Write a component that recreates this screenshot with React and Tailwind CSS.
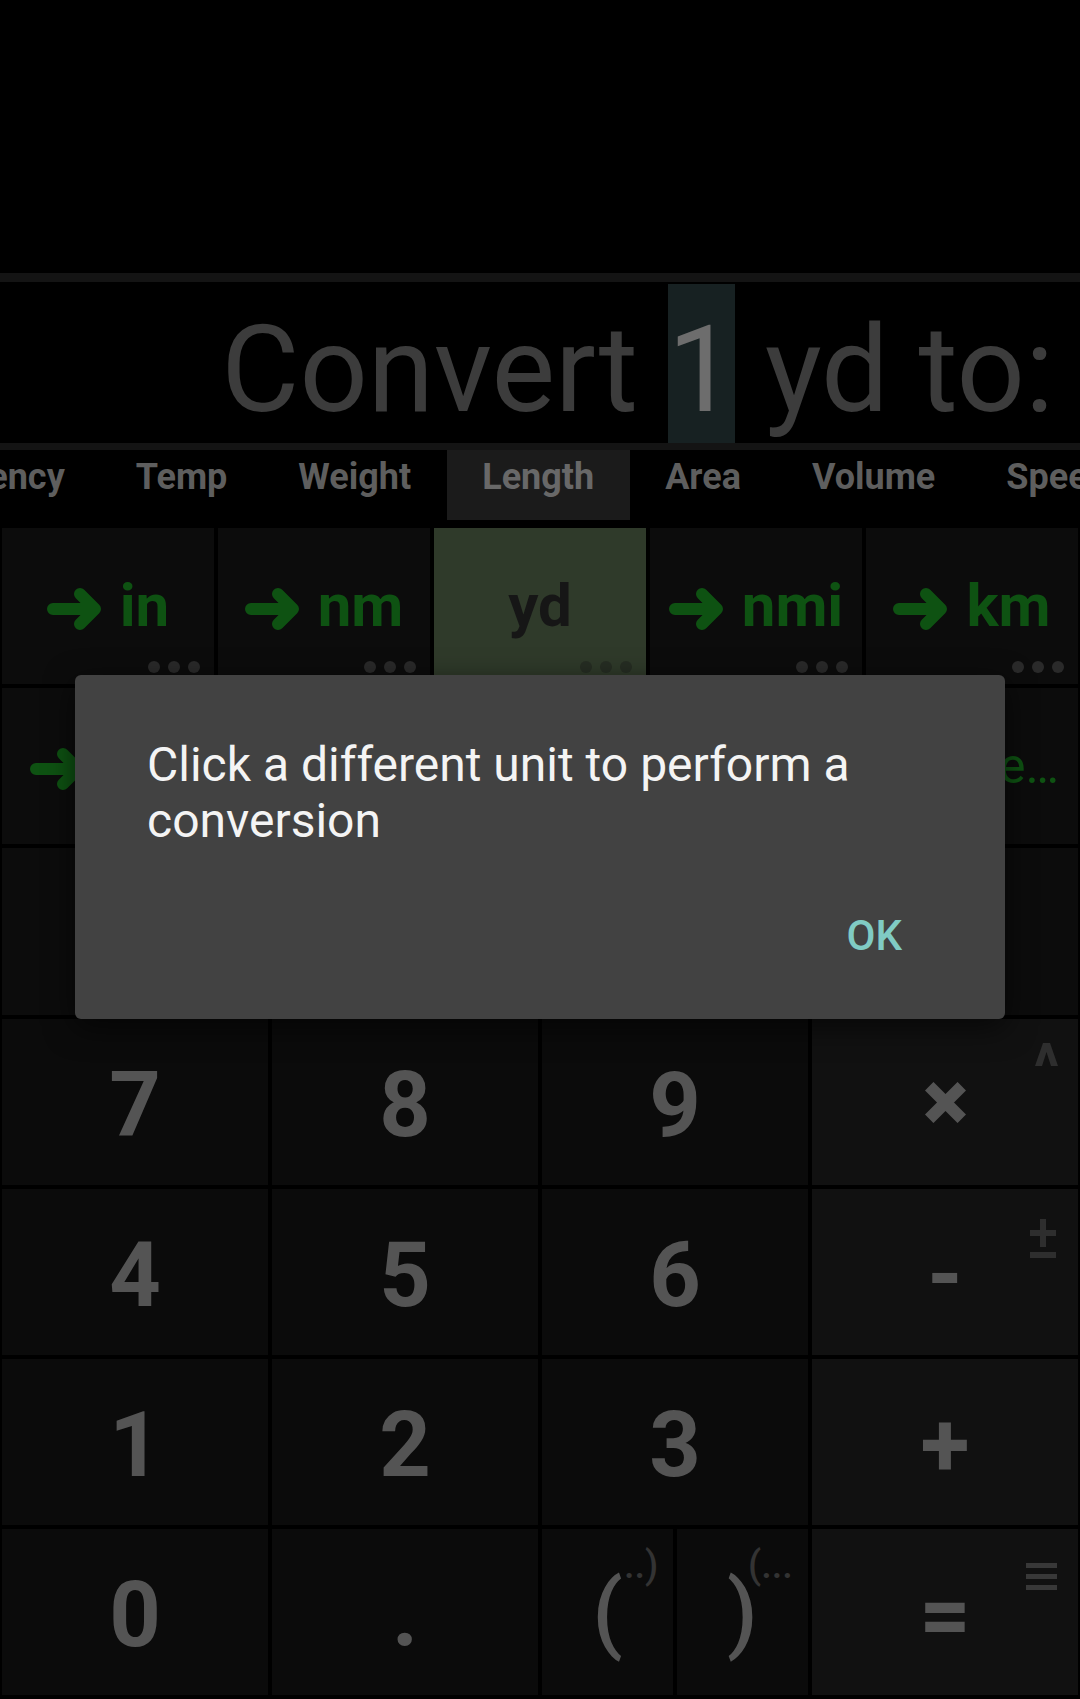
import React from 'react';

const tabs = ['Currency', 'Temp', 'Weight', 'Length', 'Area', 'Volume', 'Speed', 'Time'];

const Arrow = ({ className = '' }) => (
  <svg className={className} width="55" height="42" viewBox="0 0 55 42" fill="none" stroke="currentColor" strokeWidth="12" strokeLinecap="round" strokeLinejoin="round">
    <path d="M6 21H48M33 6l15 15-15 15" />
  </svg>
);

const Dots = ({ dark }) => (
  <div className="absolute right-[14px] bottom-[11px] flex gap-[8px]">
    {[0, 1, 2].map((i) => (
      <span key={i} className={`w-[12px] h-[12px] rounded-full ${dark ? 'bg-[#262d23]' : 'bg-[#2a2a2a]'}`} />
    ))}
  </div>
);

const UnitCell = ({ unit, active, dots, arrow = true }) => (
  <div className={`relative m-[2px] flex items-center justify-center ${active ? 'bg-[#2f3a2a]' : 'bg-[#0c0c0c]'}`}>
    {unit && (
      <div className={`flex items-center gap-[18px] text-[60px] font-bold ${active ? 'text-[#161616]' : 'text-[#0e5212]'}`}>
        {arrow && !active && <Arrow className="mt-[5px]" />}
        <span>{unit}</span>
      </div>
    )}
    {dots && <Dots dark={active} />}
  </div>
);

const Key = ({ label, op, children, className = '' }) => (
  <div className={`relative m-[2px] flex items-center justify-center text-[90px] font-bold leading-none text-[#545454] ${op ? 'bg-[#111111]' : 'bg-[#0b0b0b]'} ${className}`}>
    {label !== undefined && <span className="pt-[8px]">{label}</span>}
    {children}
  </div>
);

export default function App() {
  return (
    <div className="relative w-[1080px] h-[1699px] overflow-hidden bg-black font-['Roboto',sans-serif]">
      {/* status / empty area */}
      <div className="h-[273px]" />
      <div className="h-[9px] bg-[#141414]" />
      <div className="h-[2px]" />

      {/* display */}
      <div className="h-[159px] pr-[26px] text-right whitespace-nowrap text-[120px] leading-[120px] text-[#3c3c3c]">
        Convert{' '}
        <span className="inline-block pt-[26px] pb-[13px] bg-[#172122] text-[#6d6d6d]">1</span>
        {' '}yd to:
      </div>
      <div className="h-[7px] bg-[#141414]" />

      {/* category tabs, scrolled so Length sits mid-screen */}
      <div className="h-[70px] overflow-hidden">
        <div className="flex h-full ml-[-117px]">
          {tabs.map((t) => (
            <div
              key={t}
              className={`shrink-0 h-full px-[35.5px] pt-[6px] text-[36px] leading-[42px] font-bold ${
                t === 'Length' ? 'bg-[#1b1b1b] text-[#686868]' : 'text-[#5e5e5e]'
              }`}
            >
              {t}
            </div>
          ))}
        </div>
      </div>
      <div className="h-[6px]" />

      {/* unit grid */}
      <div className="grid grid-cols-5 grid-rows-[160px_160px_171px]">
        <UnitCell unit="in" dots />
        <UnitCell unit="nm" dots />
        <UnitCell unit="yd" active dots />
        <UnitCell unit="nmi" dots />
        <UnitCell unit="km" dots />

        <UnitCell unit="cm" />
        <UnitCell />
        <UnitCell />
        <UnitCell />
        <div className="m-[2px] bg-[#0c0c0c] flex items-center justify-end pr-[19px] overflow-hidden whitespace-nowrap text-[#0e5212]">
          <Arrow className="shrink-0 mt-[5px] mr-[18px]" />
          <span className="text-[50px]">light-ye…</span>
        </div>

        <UnitCell />
        <UnitCell />
        <UnitCell />
        <UnitCell />
        <UnitCell />
      </div>

      {/* keypad */}
      <div className="grid grid-cols-4 grid-rows-[170px_170px_170px_170px]">
        <Key label="7" />
        <Key label="8" />
        <Key label="9" />
        <Key op>
          <svg width="41" height="41" viewBox="0 0 41 41" stroke="currentColor" strokeWidth="12">
            <path d="M4.2 4.2L36.8 36.8M36.8 4.2L4.2 36.8" />
          </svg>
          <svg className="absolute right-[20px] top-[24px] text-[#2e2e2e]" width="23" height="23" viewBox="0 0 23 23" fill="currentColor">
            <polygon points="0,23 8,0 15,0 23,23 16,23 11.5,9 7,23" />
          </svg>
        </Key>

        <Key label="4" />
        <Key label="5" />
        <Key label="6" />
        <Key op label="-">
          <svg className="absolute right-[22px] top-[30px] text-[#2e2e2e]" width="26" height="39" viewBox="0 0 26 39" fill="currentColor">
            <rect x="10" y="0" width="6" height="28" />
            <rect x="0" y="11" width="26" height="6" />
            <rect x="0" y="33" width="26" height="6" />
          </svg>
        </Key>

        <Key label="1" />
        <Key label="2" />
        <Key label="3" />
        <Key op label="+" />

        <Key label="0" />
        <Key label="." />
        <div className="flex">
          <div className="relative flex-1 m-[2px] bg-[#0b0b0b] flex items-center justify-center text-[88px] font-medium leading-none text-[#545454]">
            <span>(</span>
            <span className="absolute left-[82px] top-[17px] text-[38px] leading-none text-[#333333]">..)</span>
          </div>
          <div className="relative flex-1 m-[2px] bg-[#0b0b0b] flex items-center justify-center text-[88px] font-medium leading-none text-[#545454]">
            <span>)</span>
            <span className="absolute left-[71px] top-[17px] text-[38px] leading-none text-[#333333]">(...</span>
          </div>
        </div>
        <Key op label="=">
          <svg className="absolute right-[21px] top-[34px] text-[#383838]" width="31" height="27" viewBox="0 0 31 27" fill="currentColor">
            <rect x="0" y="0" width="31" height="5" />
            <rect x="0" y="11" width="31" height="5" />
            <rect x="0" y="22" width="31" height="5" />
          </svg>
        </Key>
      </div>

      {/* dialog */}
      <div className="absolute left-[75px] top-[675px] w-[930px] h-[344px] rounded-[6px] bg-[#424242] shadow-[0_8px_30px_rgba(0,0,0,0.6)] flex flex-col">
        <p className="pl-[72px] pr-[72px] pt-[62px] text-[48px] leading-[56px] text-[#f4f4f4]">
          Click a different unit to perform a conversion
        </p>
        <div className="flex justify-end pr-[103px] mt-[63px]">
          <span className="text-[42px] leading-[48px] font-medium text-[#80cbc4]">OK</span>
        </div>
      </div>
    </div>
  );
}
